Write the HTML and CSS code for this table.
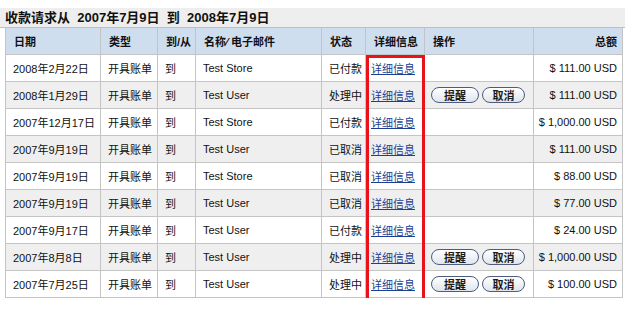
FILE: index.html
```html
<!DOCTYPE html>
<html lang="zh">
<head>
<meta charset="utf-8">
<link rel="stylesheet" href="styles.css">
</head>
<body>
<div class="title">收款请求从&nbsp; 2007年7月9日&nbsp; 到&nbsp; 2008年7月9日</div>
<div class="wrap">
<table class="grid">
<colgroup>
<col class="c1"><col class="c2"><col class="c3"><col class="c4"><col class="c5"><col class="c6"><col class="c7"><col class="c8">
</colgroup>
<thead>
<tr><th>日期</th><th>类型</th><th>到/从</th><th>名称⁄ 电子邮件</th><th>状态</th><th>详细信息</th><th>操作</th><th class="r">总额</th></tr>
</thead>
<tbody>
<tr><td>2008年2月22日</td><td>开具账单</td><td>到</td><td>Test Store</td><td>已付款</td><td class="lk"><a href="#">详细信息</a></td><td></td><td class="r">$ 111.00 USD</td></tr>
<tr><td>2008年1月29日</td><td>开具账单</td><td>到</td><td>Test User</td><td>处理中</td><td class="lk"><a href="#">详细信息</a></td><td><span class="btns"><span class="btn b1">提醒</span><span class="btn b2">取消</span></span></td><td class="r">$ 111.00 USD</td></tr>
<tr><td>2007年12月17日</td><td>开具账单</td><td>到</td><td>Test Store</td><td>已付款</td><td class="lk"><a href="#">详细信息</a></td><td></td><td class="r">$ 1,000.00 USD</td></tr>
<tr><td>2007年9月19日</td><td>开具账单</td><td>到</td><td>Test User</td><td>已取消</td><td class="lk"><a href="#">详细信息</a></td><td></td><td class="r">$ 111.00 USD</td></tr>
<tr><td>2007年9月19日</td><td>开具账单</td><td>到</td><td>Test Store</td><td>已取消</td><td class="lk"><a href="#">详细信息</a></td><td></td><td class="r">$ 88.00 USD</td></tr>
<tr><td>2007年9月19日</td><td>开具账单</td><td>到</td><td>Test User</td><td>已取消</td><td class="lk"><a href="#">详细信息</a></td><td></td><td class="r">$ 77.00 USD</td></tr>
<tr><td>2007年9月17日</td><td>开具账单</td><td>到</td><td>Test User</td><td>已付款</td><td class="lk"><a href="#">详细信息</a></td><td></td><td class="r">$ 24.00 USD</td></tr>
<tr><td>2007年8月8日</td><td>开具账单</td><td>到</td><td>Test User</td><td>处理中</td><td class="lk"><a href="#">详细信息</a></td><td><span class="btns"><span class="btn b1">提醒</span><span class="btn b2">取消</span></span></td><td class="r">$ 1,000.00 USD</td></tr>
<tr><td>2007年7月25日</td><td>开具账单</td><td>到</td><td>Test User</td><td>处理中</td><td class="lk"><a href="#">详细信息</a></td><td><span class="btns"><span class="btn b1">提醒</span><span class="btn b2">取消</span></span></td><td class="r">$ 100.00 USD</td></tr>
</tbody>
</table>
<div class="highlight"></div>
</div>
</body>
</html>
```
FILE: styles.css
```css
html, body {
  margin: 0;
  padding: 0;
  background: #ffffff;
}
body {
  font-family: "Liberation Sans", Arial, "Noto Sans CJK SC", sans-serif;
  font-size: 11px;
  color: #111;
}
.title {
  margin-top: 8px;
  height: 19px;
  line-height: 19px;
  background: #eeeeee;
  border-bottom: 1px solid #c9c2a2;
  padding-left: 5px;
  font-size: 13px;
  font-weight: bold;
  color: #111;
  white-space: pre;
}
.wrap {
  position: relative;
  margin-left: 5px;
  width: 617px;
}
.grid {
  border-collapse: collapse;
  table-layout: fixed;
  width: 617px;
}
.c1 { width: 95px; }
.c2 { width: 57px; }
.c3 { width: 38px; }
.c4 { width: 126px; }
.c5 { width: 44px; }
.c6 { width: 59px; }
.c7 { width: 109px; }
.c8 { width: 89px; }
.grid th, .grid td {
  border: 1px solid #c4c4c4;
  height: 26px;
  padding: 0 0 0 7px;
  text-align: left;
  white-space: nowrap;
  overflow: hidden;
  font-size: 11px;
}
.grid thead th {
  background: #cfdeef;
  font-weight: bold;
  height: 26px;
  border-top: none;
  padding-left: 8px;
}
.grid tbody tr:nth-child(even) td {
  background: #efefef;
}
.grid .r {
  text-align: right;
  padding: 0 5px 0 0;
}
.grid thead .r {
  padding-right: 5px;
}
.grid td.lk {
  padding-left: 5px;
}
.grid a {
  color: #1c3f94;
  text-decoration: underline;
}
.btns {
  display: flex;
  gap: 3px;
  margin-left: -1px;
}
.btn {
  display: flex;
  align-items: center;
  justify-content: center;
  height: 14px;
  border: 1px solid #4d5c7e;
  border-radius: 8px;
  background: linear-gradient(#ffffff, #dfe5ee);
  font-size: 11px;
  font-weight: bold;
  color: #1a1a1a;
}
.b1 { width: 46px; }
.b2 { width: 41px; }
.highlight {
  position: absolute;
  left: 361px;
  top: 27px;
  width: 53px;
  height: 240px;
  border: 3px solid #e8121a;
  pointer-events: none;
}
```
